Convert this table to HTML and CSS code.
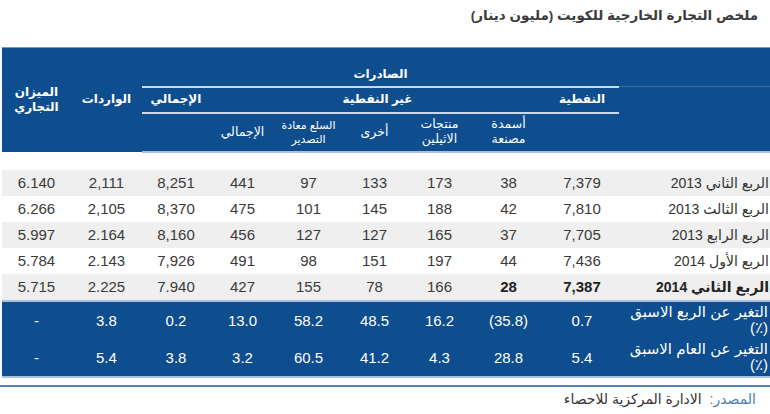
FILE: index.html
```html
<!DOCTYPE html>
<html lang="ar" dir="rtl">
<head>
<meta charset="utf-8">
<link rel="stylesheet" href="styles.css">
</head>
<body>
<div class="page">
  <h1 class="title">ملخص التجارة الخارجية للكويت (مليون دينار)</h1>
  <table class="trade">
    <colgroup>
      <col class="c-label"><col class="c-oil"><col class="c-fert"><col class="c-eth"><col class="c-other"><col class="c-reexp"><col class="c-ntot"><col class="c-etot"><col class="c-imp"><col class="c-bal">
    </colgroup>
    <thead>
      <tr class="h1">
        <th class="hl"></th>
        <th colspan="7" class="exports">الصادرات</th>
        <th rowspan="3" class="tall">الواردات</th>
        <th rowspan="3" class="tall">الميزان<br>التجاري</th>
      </tr>
      <tr class="h2">
        <th class="hl2"></th>
        <th class="oil">النفطية</th>
        <th colspan="5" class="lined">غير النفطية</th>
        <th class="lined">الإجمالي</th>
      </tr>
      <tr class="h3">
        <th></th>
        <th></th>
        <th class="sub">أسمدة<br>مصنعة</th>
        <th class="sub">منتجات<br>الاثيلين</th>
        <th class="sub">أخرى</th>
        <th class="sub small">السلع معادة<br>التصدير</th>
        <th class="sub">الإجمالي</th>
        <th></th>
      </tr>
    </thead>
    <tbody>
      <tr class="gap"><td colspan="10"></td></tr>
      <tr class="odd"><td class="lbl">الربع الثاني 2013</td><td>7,379</td><td>38</td><td>173</td><td>133</td><td>97</td><td>441</td><td>8,251</td><td>2,111</td><td>6.140</td></tr>
      <tr class="even"><td class="lbl">الربع الثالث 2013</td><td>7,810</td><td>42</td><td>188</td><td>145</td><td>101</td><td>475</td><td>8,370</td><td>2,105</td><td>6.266</td></tr>
      <tr class="odd"><td class="lbl">الربع الرابع 2013</td><td>7,705</td><td>37</td><td>165</td><td>127</td><td>127</td><td>456</td><td>8,160</td><td>2.164</td><td>5.997</td></tr>
      <tr class="even"><td class="lbl">الربع الأول 2014</td><td>7,436</td><td>44</td><td>197</td><td>151</td><td>98</td><td>491</td><td>7,926</td><td>2.143</td><td>5.784</td></tr>
      <tr class="odd last"><td class="lbl b">الربع الثاني 2014</td><td class="b">7,387</td><td class="b">28</td><td>166</td><td>78</td><td>155</td><td>427</td><td>7.940</td><td>2.225</td><td>5.715</td></tr>
    </tbody>
    <tfoot>
      <tr class="f first"><td class="flbl">التغير عن الربع الاسبق<br>(٪)</td><td>0.7</td><td>(35.8)</td><td>16.2</td><td>48.5</td><td>58.2</td><td>13.0</td><td>0.2</td><td>3.8</td><td>-</td></tr>
      <tr class="f"><td class="flbl">التغير عن العام الاسبق<br>(٪)</td><td>5.4</td><td>28.8</td><td>4.3</td><td>41.2</td><td>60.5</td><td>3.2</td><td>3.8</td><td>5.4</td><td>-</td></tr>
    </tfoot>
  </table>
  <div class="source"><span class="src-key">المصدر:</span> الادارة المركزية للاحصاء</div>
</div>
</body>
</html>
```

FILE: styles.css
```css
html, body {
  margin: 0;
  padding: 0;
  background: #ffffff;
}
body {
  font-family: "Liberation Sans", "DejaVu Sans", sans-serif;
  color: #3a3a3a;
}
.page {
  width: 770px;
  height: 414px;
  overflow: hidden;
}
.title {
  margin: 0;
  height: 47px;
  box-sizing: border-box;
  padding: 6px 12px 0 0;
  font-size: 13.5px;
  font-weight: bold;
  color: #3c3c3c;
  line-height: 20px;
}
.trade {
  width: 768px;
  table-layout: fixed;
  border-collapse: collapse;
  border-spacing: 0;
}
.c-label { width: 151px; }
.c-oil { width: 74px; }
.c-fert { width: 73px; }
.c-eth { width: 65px; }
.c-other { width: 65px; }
.c-reexp { width: 67px; }
.c-ntot { width: 65px; }
.c-etot { width: 68px; }
.c-imp { width: 71px; }
.c-bal { width: 69px; }

.trade th, .trade td {
  padding: 0;
  text-align: center;
}
thead th {
  background: #0e4d8e;
  color: #ffffff;
  font-weight: bold;
  font-size: 12px;
  line-height: 15px;
}
thead tr.h1 th {
  border-top: 1px solid #6f97c4;
}
thead tr.h1 { height: 39px; }
thead tr.h2 { height: 26px; }
thead tr.h3 { height: 39px; }
thead th.exports {
  vertical-align: bottom;
  padding-bottom: 4px;
  border-bottom: 2px solid #c9d8ea;
}
thead th.hl {
  border-bottom: 1px solid #3c6fa6;
}
thead th.lined, thead th.oil {
  border-bottom: 2px solid #c9d8ea;
}
thead th.tall {
  vertical-align: middle;
}
thead th.sub {
  font-weight: normal;
  font-size: 12.5px;
}
thead th.sub.small {
  font-size: 11px;
  line-height: 14px;
}
thead tr.h3 th {
  border-bottom: 2px solid #a8c2e0;
}
thead th.sub:last-child { font-weight: bold; font-size: 12px; }

tbody tr.gap { height: 17px; }
tbody tr.gap td { background: #ffffff; height: 17px; }
tbody td {
  font-size: 15px;
  color: #3a3a3a;
  height: 26px;
}
tbody tr.odd td { background: #efefef; }
tbody tr.even td { background: #ffffff; }
tbody tr.last td { border-bottom: 2px solid #a8c2e0; }
tbody td.lbl {
  text-align: right;
  padding-right: 1px;
  font-size: 14px;
  color: #333333;
  white-space: nowrap;
}
tbody td.b { font-weight: bold; color: #222222; }

tfoot tr.f td {
  background: #0e4d8e;
  color: #ffffff;
  font-size: 15px;
  height: 37px;
}
tfoot tr.first td { border-top: 2px solid #ffffff; }
tfoot td.flbl {
  text-align: right;
  padding-right: 2px;
  font-size: 12px;
  font-weight: normal;
  line-height: 16px;
  white-space: nowrap;
  overflow: hidden;
}
tfoot tr.f:last-child td { border-bottom: 2px solid #a8c2e0; }

.source {
  margin-top: 7px;
  border-top: 2px solid #5a7fa8;
  padding: 3px 14px 0 0;
  font-size: 14px;
  line-height: 18px;
  color: #333333;
}
.src-key {
  color: #4d7db5;
  margin-left: 4px;
}
```
